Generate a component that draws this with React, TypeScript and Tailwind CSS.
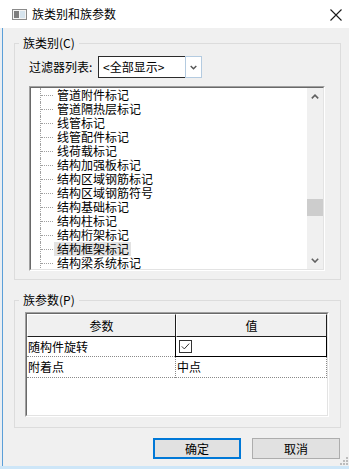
import React from 'react';

const treeItems = [
  '管道附件标记',
  '管道隔热层标记',
  '线管标记',
  '线管配件标记',
  '线荷载标记',
  '结构加强板标记',
  '结构区域钢筋标记',
  '结构区域钢筋符号',
  '结构基础标记',
  '结构柱标记',
  '结构桁架标记',
  '结构框架标记',
  '结构梁系统标记',
];

const WindowIcon: React.FC = () => (
  <svg width="15" height="11" viewBox="0 0 15 11" className="shrink-0">
    <rect x="0.5" y="0.5" width="14" height="10" fill="#f4f4f4" stroke="#8a8a8a" />
    <rect x="2" y="2" width="5" height="7" fill="#7d7d7d" />
    <rect x="8" y="2" width="5" height="7" fill="#d6e4ee" />
  </svg>
);

const CloseIcon: React.FC = () => (
  <svg width="12" height="12" viewBox="0 0 12 12" className="shrink-0">
    <path d="M0.5 0.5 L11.5 11.5 M11.5 0.5 L0.5 11.5" stroke="#1a1a1a" strokeWidth="1.1" fill="none" />
  </svg>
);

const Chevron: React.FC<{ up?: boolean; color?: string; w?: number }> = ({ up, color = '#606060', w = 8 }) => (
  <svg width={w} height="5" viewBox="0 0 8 5">
    {up ? (
      <path d="M0.8 4.4 L4 1.2 L7.2 4.4" stroke={color} strokeWidth="1.6" fill="none" />
    ) : (
      <path d="M0.8 0.8 L4 4 L7.2 0.8" stroke={color} strokeWidth="1.6" fill="none" />
    )}
  </svg>
);

const Sunken: React.FC<{ className?: string; children: React.ReactNode }> = ({ className = '', children }) => (
  <div className={`border-t border-l border-[#a0a0a0] border-r border-b border-r-white border-b-white ${className}`}>
    <div className="w-full h-full border-t border-l border-[#696969] border-r border-b border-r-[#e3e3e3] border-b-[#e3e3e3] bg-white flex">
      {children}
    </div>
  </div>
);

export default function App() {
  return (
    <div className="relative w-[349px] h-[469px] flex flex-col bg-[#f0f0f0] overflow-hidden font-['Noto_Sans_CJK_SC',sans-serif] text-[12px] leading-[14px] text-black">
      {/* title bar */}
      <div className="h-[28px] shrink-0 bg-white flex items-center pl-[12px] pr-[7px]">
        <WindowIcon />
        <span className="ml-[5px]">族类别和族参数</span>
        <div className="ml-auto mt-[1px]">
          <CloseIcon />
        </div>
      </div>

      <div className="flex flex-1 min-h-0">
        <div className="w-[3px] bg-[#e9eef3] border-r border-[#5b9fd8]" />
        <div className="flex-1 flex flex-col pl-[11px] pr-[8px]">
          {/* 族类别 */}
          <fieldset className="mt-[8px] border border-[#dcdcdc]">
            <legend className="ml-[4px] px-[4px] leading-[14px]">族类别(C)</legend>
            <div className="px-[14px] pb-[8px]">
              <div className="mt-[6px] flex items-center h-[22px]">
                <span className="w-[69px]">过滤器列表:</span>
                <div className="w-[104px] h-[22px] flex">
                  <div className="flex-1 border border-r-0 border-[#2b2b2b] bg-white flex items-center pl-[4px]">
                    &lt;全部显示&gt;
                  </div>
                  <div className="w-[17px] border border-[#b4cbe0] bg-white flex items-center justify-center">
                    <Chevron color="#555555" w={7} />
                  </div>
                </div>
              </div>

              <Sunken className="mt-[8px] w-[296px] h-[185px]">
                <div className="flex-1 flex flex-col overflow-hidden">
                  {treeItems.map((name) => (
                    <div key={name} className="flex h-[14px] shrink-0">
                      <div className="w-[9px]" />
                      <div className="w-[13px] border-l border-dotted border-[#a0a0a0] flex items-center">
                        <div className="w-full border-t border-dotted border-[#a0a0a0]" />
                      </div>
                      <div
                        className={`ml-[1px] pl-[3px] pr-[2px] whitespace-nowrap ${
                          name === '结构框架标记' ? 'bg-[#e3e3e3]' : ''
                        }`}
                      >
                        {name}
                      </div>
                    </div>
                  ))}
                </div>
                <div className="w-[16px] bg-[#f0f0f0] flex flex-col">
                  <div className="h-[17px] flex items-center justify-center">
                    <Chevron up />
                  </div>
                  <div className="flex-1">
                    <div className="mt-[94px] h-[17px] bg-[#cdcdcd]" />
                  </div>
                  <div className="h-[17px] flex items-center justify-center">
                    <Chevron />
                  </div>
                </div>
              </Sunken>
            </div>
          </fieldset>

          {/* 族参数 */}
          <fieldset className="mt-[13px] border border-[#dcdcdc]">
            <legend className="ml-[4px] px-[4px] leading-[14px]">族参数(P)</legend>
            <div className="pl-[10px] pr-[11px] pb-[10px]">
              <Sunken className="mt-[5px] w-[304px] h-[105px]">
                <div className="flex-1 flex flex-col">
                  <div className="flex h-[23px] bg-[#f0f0f0]">
                    <div className="w-[149px] border-r border-b border-[#1e1e1e] border-t border-l border-t-white border-l-white flex items-center justify-center">
                      参数
                    </div>
                    <div className="w-[151px] border-r border-b border-[#1e1e1e] border-t border-l border-t-white border-l-white flex items-center justify-center">
                      值
                    </div>
                  </div>
                  <div className="flex h-[20px]">
                    <div className="w-[148px] border-b border-dotted border-[#8a8a8a] flex items-center pl-[1px]">
                      随构件旋转
                    </div>
                    <div className="w-[152px] border-l border-r border-b border-[#000000] flex items-center pl-[3px]">
                      <svg width="13" height="13" viewBox="0 0 13 13">
                        <rect x="0.5" y="0.5" width="12" height="12" fill="#ffffff" stroke="#333333" />
                        <path d="M2.8 6.4 L5.3 8.9 L10.2 3.6" stroke="#333333" strokeWidth="1" fill="none" />
                      </svg>
                    </div>
                  </div>
                  <div className="flex h-[21px]">
                    <div className="w-[148px] border-b border-dotted border-[#8a8a8a] flex items-center pl-[1px]">
                      附着点
                    </div>
                    <div className="w-[152px] border-l border-r border-b border-dotted border-[#8a8a8a] flex items-center pl-[1px]">
                      中点
                    </div>
                  </div>
                </div>
              </Sunken>
            </div>
          </fieldset>

          {/* buttons */}
          <div className="mt-[10px] flex justify-end gap-[11px] mr-[1px]">
            <button className="w-[88px] h-[21px] border-2 border-[#0078d7] bg-[#e1e1e1] flex items-center justify-center">
              确定
            </button>
            <button className="w-[88px] h-[21px] border border-[#adadad] bg-[#e1e1e1] flex items-center justify-center">
              取消
            </button>
          </div>
        </div>
      </div>

      <div className="h-[3px] shrink-0 bg-[#cde6f8]" />

      {/* resize grip */}
      <svg width="8" height="8" viewBox="0 0 8 8" className="absolute right-[1px] bottom-[4px]">
        <rect x="6" y="0" width="2" height="2" fill="#bcbcbc" />
        <rect x="3" y="3" width="2" height="2" fill="#bcbcbc" />
        <rect x="6" y="3" width="2" height="2" fill="#bcbcbc" />
        <rect x="0" y="6" width="2" height="2" fill="#bcbcbc" />
        <rect x="3" y="6" width="2" height="2" fill="#bcbcbc" />
        <rect x="6" y="6" width="2" height="2" fill="#bcbcbc" />
      </svg>
    </div>
  );
}
